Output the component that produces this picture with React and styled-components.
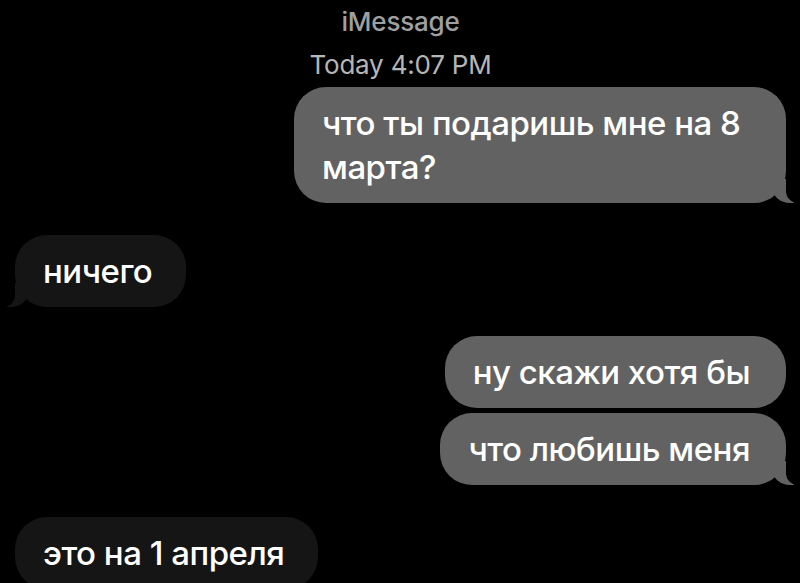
import React from "react";
import styled, { createGlobalStyle } from "styled-components";

const GlobalStyle = createGlobalStyle`
  html, body {
    margin: 0;
    background: #000;
  }
`;

const messages = [
  { id: 1, me: true, tail: true, gap: 7, text: "что ты подаришь мне на 8 марта?" },
  { id: 2, me: false, tail: true, gap: 32, text: "ничего" },
  { id: 3, me: true, tail: false, gap: 29, text: "ну скажи хотя бы" },
  { id: 4, me: true, tail: true, gap: 5, text: "что любишь меня" },
  { id: 5, me: false, tail: false, gap: 32, text: "это на 1 апреля" },
];

function App() {
  return (
    <>
      <GlobalStyle />
      <Screen>
        <Header>
          <Service>iMessage</Service>
          <Stamp>Today 4:07 PM</Stamp>
        </Header>
        <Thread>
          {messages.map((m) => (
            <Bubble key={m.id} $me={m.me} $tail={m.tail} $gap={m.gap}>
              {m.text}
            </Bubble>
          ))}
        </Thread>
      </Screen>
    </>
  );
}
export default App;

const Screen = styled.div`
  width: 800px;
  height: 583px;
  box-sizing: border-box;
  padding: 0 14px 0 15px;
  overflow: hidden;
  background: #000;
  display: flex;
  flex-direction: column;
  font-family: Inter, "Noto Sans", "Liberation Sans", sans-serif;
`;

const Header = styled.header`
  display: flex;
  flex-direction: column;
  align-items: center;
  padding-top: 7px;
`;

const Service = styled.div`
  font-size: 26px;
  font-weight: 500;
  line-height: 30px;
  letter-spacing: -0.2px;
  color: #a0a0a0;
  margin-bottom: 13px;
`;

const Stamp = styled.div`
  font-size: 26px;
  font-weight: 400;
  line-height: 30px;
  letter-spacing: -0.2px;
  color: #b6b6b6;
`;

const Thread = styled.div`
  display: flex;
  flex-direction: column;
`;

const Bubble = styled.div`
  position: relative;
  align-self: ${(p) => (p.$me ? "flex-end" : "flex-start")};
  max-width: 492px;
  box-sizing: border-box;
  margin-top: ${(p) => p.$gap}px;
  padding: ${(p) => (p.$me ? "14px 36px 14px 28px" : "14px 34px 14px 28px")};
  border-radius: 32px;
  background: ${(p) => (p.$me ? "#626262" : "#151515")};
  color: #fff;
  font-size: 33px;
  font-weight: 500;
  line-height: 44px;
  letter-spacing: -0.5px;

  &::before,
  &::after {
    content: "";
    display: ${(p) => (p.$tail ? "block" : "none")};
    position: absolute;
    bottom: 0;
    height: 24px;
  }

  &::before {
    width: 22px;
    background: ${(p) => (p.$me ? "#626262" : "#151515")};
    ${(p) =>
      p.$me
        ? "right: -8px; border-bottom-left-radius: 18px 16px;"
        : "left: -8px; border-bottom-right-radius: 18px 16px;"}
  }

  &::after {
    width: 26px;
    background: #000;
    ${(p) =>
      p.$me
        ? "right: -26px; border-bottom-left-radius: 12px;"
        : "left: -26px; border-bottom-right-radius: 12px;"}
  }
`;
